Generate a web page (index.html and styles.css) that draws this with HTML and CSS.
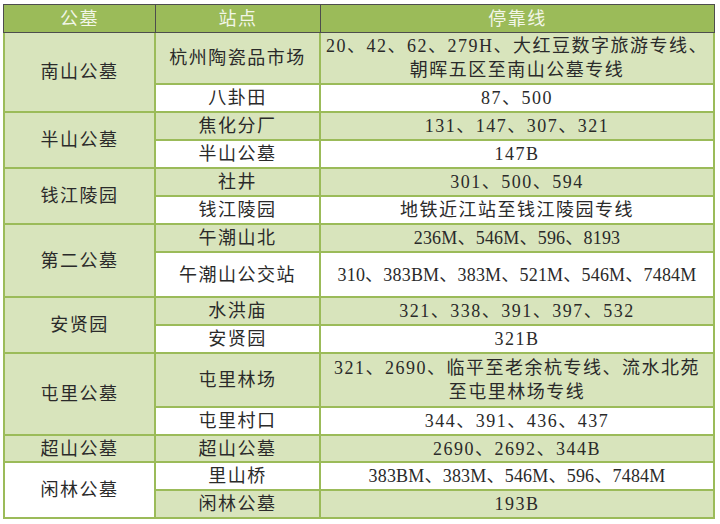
FILE: index.html
```html
<!DOCTYPE html>
<html lang="zh-CN">
<head>
<meta charset="utf-8">
<title>公墓公交线路</title>
<link rel="stylesheet" href="styles.css">
</head>
<body>
<div class="sheet">
  <div class="head">
    <div class="hc">公墓</div>
    <div class="hc">站点</div>
    <div class="hc">停靠线</div>
  </div>
  <div class="body">
    <div class="c g span2">南山公墓</div>
    <div class="c g">杭州陶瓷品市场</div>
    <div class="c g">20、42、62、279H、大红豆数字旅游专线、<br>朝晖五区至南山公墓专线</div>
    <div class="c w">八卦田</div>
    <div class="c w">87、500</div>

    <div class="c g span2">半山公墓</div>
    <div class="c g">焦化分厂</div>
    <div class="c g">131、147、307、321</div>
    <div class="c w">半山公墓</div>
    <div class="c w">147B</div>

    <div class="c g span2">钱江陵园</div>
    <div class="c g">社井</div>
    <div class="c g">301、500、594</div>
    <div class="c w">钱江陵园</div>
    <div class="c w">地铁近江站至钱江陵园专线</div>

    <div class="c g span2">第二公墓</div>
    <div class="c g">午潮山北</div>
    <div class="c g tight">236M、546M、596、8193</div>
    <div class="c w">午潮山公交站</div>
    <div class="c w tight">310、383BM、383M、521M、546M、7484M</div>

    <div class="c g span2">安贤园</div>
    <div class="c g">水洪庙</div>
    <div class="c g">321、338、391、397、532</div>
    <div class="c w">安贤园</div>
    <div class="c w">321B</div>

    <div class="c g span2">屯里公墓</div>
    <div class="c g">屯里林场</div>
    <div class="c g">321、2690、临平至老余杭专线、流水北苑<br>至屯里林场专线</div>
    <div class="c w">屯里村口</div>
    <div class="c w">344、391、436、437</div>

    <div class="c g">超山公墓</div>
    <div class="c g">超山公墓</div>
    <div class="c g">2690、2692、344B</div>

    <div class="c w span2">闲林公墓</div>
    <div class="c w">里山桥</div>
    <div class="c w tight">383BM、383M、546M、596、7484M</div>
    <div class="c g">闲林公墓</div>
    <div class="c g">193B</div>
  </div>
</div>
</body>
</html>
```
FILE: styles.css
```css
html, body {
  margin: 0;
  padding: 0;
  background: #ffffff;
}
body {
  padding: 4px 0 0 3px;
  font-family: "Liberation Serif", "Noto Sans CJK SC", serif;
  font-size: 18px;
  letter-spacing: 1.5px;
  color: #2a2a2a;
}
.sheet {
  width: 712px;
}
.head {
  display: grid;
  grid-template-columns: 151px 164px 393px;
  grid-template-rows: 27px;
  gap: 1px;
  padding: 1px;
  background: #4d4d4d;
}
.hc {
  background: #9bbb59;
  color: #f2f6e8;
  display: flex;
  align-items: center;
  justify-content: center;
  line-height: 1;
}
.body {
  display: grid;
  grid-template-columns: 149px 163px 392px;
  grid-template-rows: 50px 26px 26px 26px 26px 26px 26px 43px 26px 26px 52px 26px 25px 26px 26px;
  gap: 2px;
  padding: 0 2px 2px 2px;
  background: #9bbb59;
}
.c {
  display: flex;
  align-items: center;
  justify-content: center;
  text-align: center;
  line-height: 24px;
  white-space: nowrap;
}
.tight { letter-spacing: 0.2px; }
.g { background: #d8e4bc; }
.w { background: #ffffff; }
.span2 { grid-row: span 2; }
```
